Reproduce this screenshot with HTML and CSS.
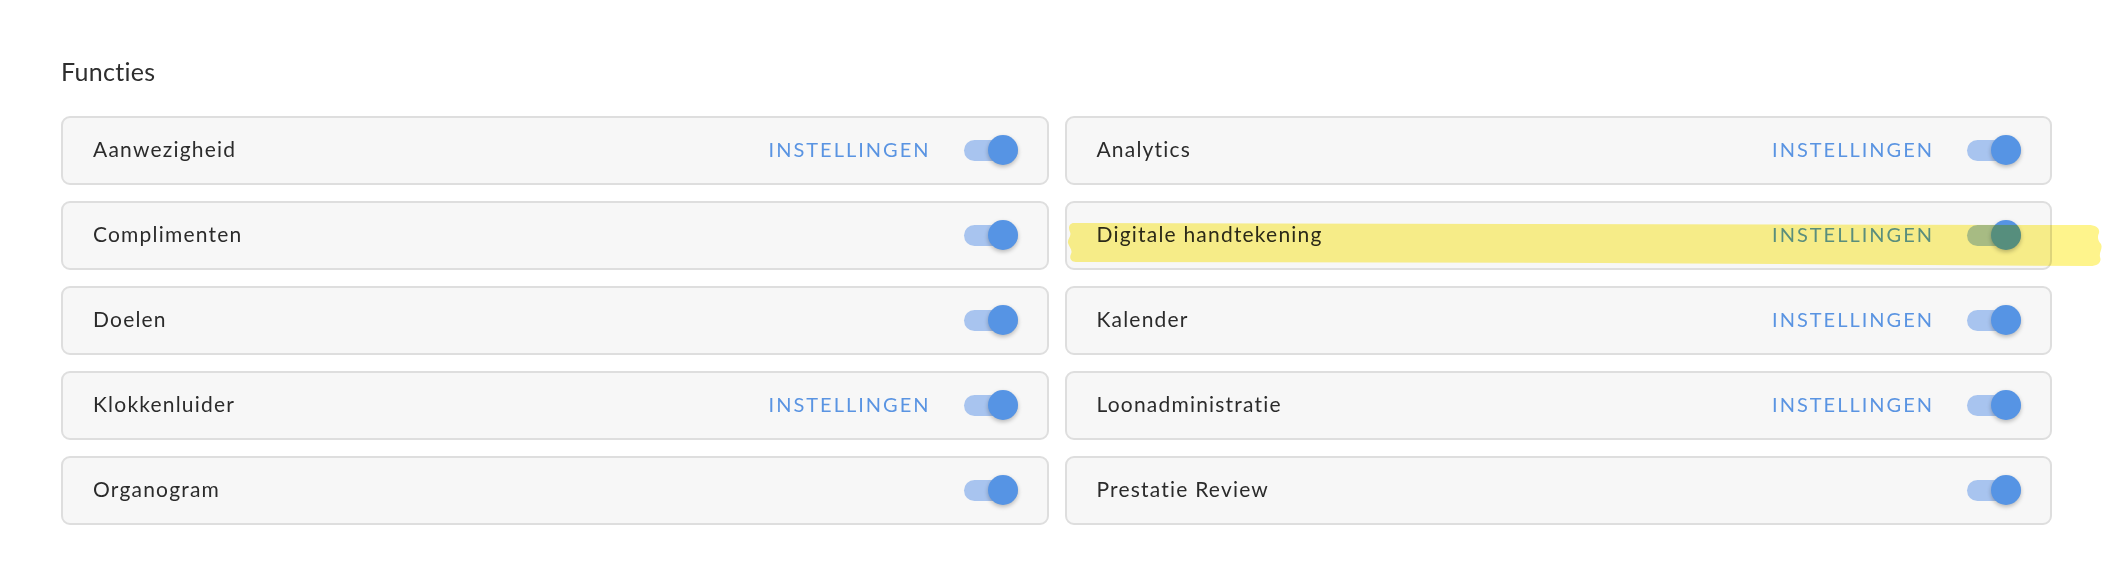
FILE: index.html
```html
<!DOCTYPE html>
<html lang="nl">
<head>
<meta charset="utf-8">
<title>Functies</title>
<link rel="stylesheet" href="styles.css">
</head>
<body>
<main class="page">
  <h2 class="title">Functies</h2>
  <div class="grid">
    <div class="card"><span class="label">Aanwezigheid</span><div class="actions"><span class="link">INSTELLINGEN</span><span class="toggle"><span class="knob"></span></span></div></div>
    <div class="card"><span class="label">Analytics</span><div class="actions"><span class="link">INSTELLINGEN</span><span class="toggle"><span class="knob"></span></span></div></div>
    <div class="card"><span class="label">Complimenten</span><div class="actions"><span class="toggle"><span class="knob"></span></span></div></div>
    <div class="card"><span class="label">Digitale handtekening</span><div class="actions"><span class="link">INSTELLINGEN</span><span class="toggle"><span class="knob"></span></span></div></div>
    <div class="card"><span class="label">Doelen</span><div class="actions"><span class="toggle"><span class="knob"></span></span></div></div>
    <div class="card"><span class="label">Kalender</span><div class="actions"><span class="link">INSTELLINGEN</span><span class="toggle"><span class="knob"></span></span></div></div>
    <div class="card"><span class="label">Klokkenluider</span><div class="actions"><span class="link">INSTELLINGEN</span><span class="toggle"><span class="knob"></span></span></div></div>
    <div class="card"><span class="label">Loonadministratie</span><div class="actions"><span class="link">INSTELLINGEN</span><span class="toggle"><span class="knob"></span></span></div></div>
    <div class="card"><span class="label">Organogram</span><div class="actions"><span class="toggle"><span class="knob"></span></span></div></div>
    <div class="card"><span class="label">Prestatie Review</span><div class="actions"><span class="toggle"><span class="knob"></span></span></div></div>
  </div>
</main>
<svg class="marker" width="2128" height="576" viewBox="0 0 2128 576" aria-hidden="true">
  <path d="M1074,223 L2088,225 C2096,225 2100,228 2099,233 C2097,237 2098,241 2101,244 C2103,249 2099,252 2100,257 C2102,262 2098,266 2090,266 L1600,263 L1076,262 C1071,262 1069,258 1071,254 C1073,250 1069,247 1068,243 C1067,239 1072,236 1070,232 C1068,228 1069,223 1074,223 Z" fill="#fef48c"/>
</svg>
</body>
</html>
```
FILE: styles.css
```css
* { box-sizing: border-box; }
html, body { margin: 0; padding: 0; background: #ffffff; }
body {
  font-family: "Lato", "Noto Sans", sans-serif;
  color: #2e2e2e;
}
.page {
  padding: 57px 0 0 61px;
  width: 2052px;
}
.title {
  margin: 0 0 31px 0;
  font-size: 25px;
  font-weight: 400;
  line-height: 28px;
  letter-spacing: 0.3px;
  color: #2e2e2e;
}
.grid {
  display: grid;
  grid-template-columns: 1fr 1fr;
  column-gap: 16px;
  row-gap: 16px;
}
.card {
  height: 69px;
  border: 2px solid #dedede;
  border-radius: 9px;
  background: #f7f7f7;
  display: flex;
  align-items: center;
  justify-content: space-between;
  padding: 0 29px 0 30px;
}
.label {
  font-size: 21px;
  letter-spacing: 1.2px;
  color: #2b2b2b;
  margin-bottom: 4px;
}
.actions {
  display: flex;
  align-items: center;
  gap: 33px;
}
.link {
  font-size: 20px;
  letter-spacing: 2px;
  color: #5a94e2;
  margin-bottom: 4px;
}
.toggle {
  position: relative;
  display: block;
  width: 54px;
  height: 21px;
  border-radius: 11px;
  background: #a8c4ef;
}
.knob {
  position: absolute;
  right: 0;
  top: -5px;
  width: 30px;
  height: 30px;
  border-radius: 50%;
  background: #5694e4;
  box-shadow: 0 2px 4px rgba(0, 0, 0, 0.25);
}
.marker {
  position: absolute;
  left: 0;
  top: 0;
  pointer-events: none;
  mix-blend-mode: multiply;
}
```
